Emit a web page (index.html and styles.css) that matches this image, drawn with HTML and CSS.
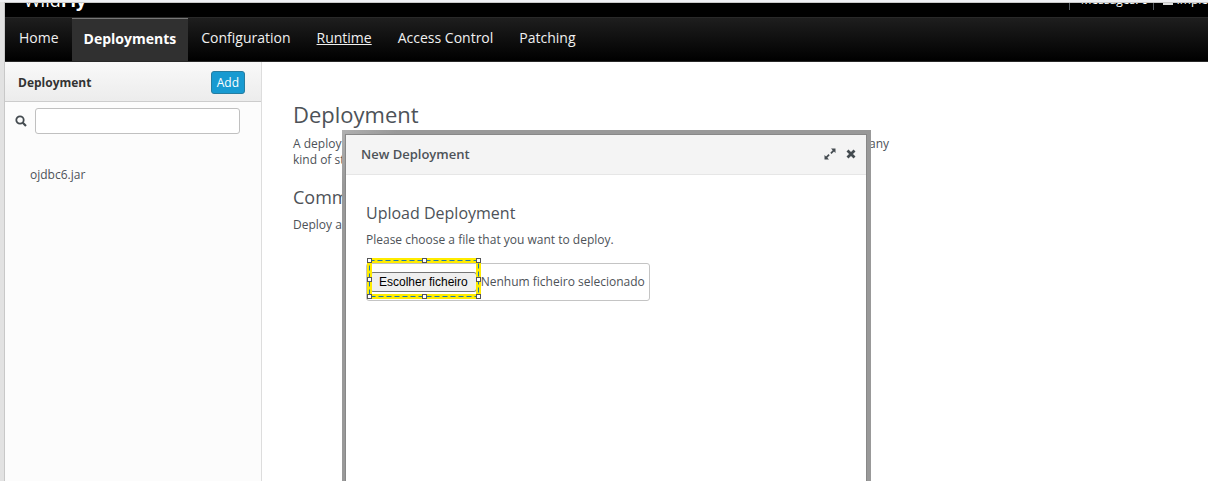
FILE: index.html
```html
<!DOCTYPE html>
<html lang="en">
<head>
<meta charset="utf-8">
<title>WildFly Management</title>
<link rel="stylesheet" href="styles.css">
</head>
<body>
<div class="frame">
  <header class="topbar">
    <div class="logo">Wild<b>Fly</b></div>
    <div class="status">
      <span class="messages">Messages: 0</span>
      <span class="user"><svg width="10" height="12" viewBox="0 0 10 12"><path d="M5 1a3 3 0 0 1 2 5c2 0 3 1 3 4v1H0v-1c0-3 1-4 3-4a3 3 0 0 1 2-5z" fill="#ddd"/></svg>Imple</span>
    </div>
  </header>
  <nav class="nav">
    <a href="#">Home</a>
    <a href="#" class="active">Deployments</a>
    <a href="#">Configuration</a>
    <a href="#" class="hovered">Runtime</a>
    <a href="#">Access Control</a>
    <a href="#">Patching</a>
  </nav>
  <div class="workspace">
    <aside class="sidebar">
      <div class="sidebar-head">
        <h2>Deployment</h2>
        <button class="add" type="button">Add</button>
      </div>
      <div class="search">
        <label for="filter" aria-label="Filter"><svg width="12" height="12" viewBox="0 0 12 12" fill="none" stroke="#444b50"><circle cx="5" cy="5" r="3.7" stroke-width="1.8"/><path d="M7.8 7.8 11 11" stroke-width="2.2"/></svg></label>
        <input id="filter" type="text">
      </div>
      <a class="item" href="#">ojdbc6.jar</a>
    </aside>
    <main class="content">
      <h1>Deployment</h1>
      <p>A deployment represents anything that can be deployed (e.g. an application such as EJB-JAR, WAR, EAR, any kind of standard archive such as RAR or JBoss-specific deployment).</p>
      <h3>Common Tasks</h3>
      <p>Deploy an application to the server.</p>
    </main>
  </div>
  <section class="dialog" role="dialog" aria-labelledby="dialog-title">
    <div class="dialog-inner">
      <div class="dialog-head">
        <h2 id="dialog-title">New Deployment</h2>
        <button class="icon" type="button" aria-label="Maximize"><svg width="12" height="12" viewBox="0 0 12 12"><path d="M7 .5h4.500V5L10 3.500 7.500 6 6.300 4.800 8.700 2.200zM5 11.500H.500V7L2 8.500 4.500 6l1.200 1.200L3.300 9.800z" fill="#444b50"/></svg></button>
        <button class="icon" type="button" aria-label="Close"><svg width="10" height="10" viewBox="0 0 10 10"><path d="M1.500 1.500l7 7M8.500 1.500l-7 7" stroke="#444b50" stroke-width="2.800"/></svg></button>
      </div>
      <div class="dialog-body">
        <h3>Upload Deployment</h3>
        <p>Please choose a file that you want to deploy.</p>
        <div class="file">
          <button class="choose" type="button" aria-describedby="file-name">Escolher ficheiro</button>
          <span id="file-name">Nenhum ficheiro selecionado</span>
          <svg class="marker" width="115" height="44" viewBox="0 0 115 44" fill="none" aria-hidden="true">
            <rect x="3.500" y="3.500" width="109" height="36" stroke="#ffec00" stroke-width="5"/>
            <rect x="3.500" y="3.500" width="109" height="36" stroke="#1b78ad" stroke-dasharray="5 3"/>
            <g fill="#fff" stroke="#555">
              <rect x="1.500" y="1.500" width="4" height="4"/><rect x="56.500" y="1.500" width="4" height="4"/><rect x="110.500" y="1.500" width="4" height="4"/>
              <rect x="1.500" y="20.500" width="4" height="4"/><rect x="110.500" y="20.500" width="4" height="4"/>
              <rect x="1.500" y="37.500" width="4" height="4"/><rect x="56.500" y="37.500" width="4" height="4"/><rect x="110.500" y="37.500" width="4" height="4"/>
            </g>
          </svg>
        </div>
      </div>
    </div>
  </section>
</div>
</body>
</html>
```

FILE: styles.css
```css
* { box-sizing: border-box; }
body {
  margin: 0;
  height: 100vh;
  overflow: hidden;
  padding: 3px 0 0 5px;
  background: linear-gradient(#f0f1f4 2px, transparent 2px), linear-gradient(90deg, #e2e2e2 4px, #c8c8c8 4px);
  font: 12px/16px "Open Sans", sans-serif;
  color: #4d5258;
}
h1, h2, h3, p { margin: 0; font-weight: 400; }
button { font-family: inherit; cursor: pointer; }
.frame {
  position: relative;
  display: flex;
  flex-direction: column;
  height: 100%;
  background: #fff;
  overflow: hidden;
}
.topbar {
  display: flex;
  justify-content: space-between;
  align-items: flex-end;
  height: 14px;
  flex: none;
  overflow: hidden;
  background: #000;
  color: #fff;
}
.logo { padding: 0 0 4px 19px; font-size: 18px; line-height: 26px; }
.status { display: flex; padding-bottom: 7px; font-size: 12px; line-height: 20px; }
.messages, .user { border-left: 1px solid #555b61; }
.messages { padding: 0 5px 0 11px; }
.user { display: flex; gap: 3px; align-items: center; padding-left: 9px; }
.nav {
  display: flex;
  flex: none;
  height: 45px;
  border-top: 1px solid #292929;
  border-bottom: 1px solid #292929;
  background: linear-gradient(#1e1e1e, #000);
  font-size: 14px;
  line-height: 40px;
}
.nav a { padding: 0 13px; color: #f0f0f0; text-decoration: none; }
.nav a:first-child { padding-left: 14px; }
.nav .active {
  padding: 0 12px;
  border-top: 1px solid #777;
  background: #303030;
  color: #fff;
  font-weight: 700;
}
.nav .hovered { text-decoration: underline; text-decoration-thickness: 1px; }
.workspace { display: flex; flex: 1; min-height: 0; }
.sidebar {
  width: 257px;
  flex: none;
  border-right: 1px solid #ddd;
  background: #fcfcfc;
}
.sidebar-head {
  display: flex;
  align-items: center;
  justify-content: space-between;
  height: 40px;
  padding: 2px 16px 0 13px;
  border-bottom: 1px solid #ccc;
  background: linear-gradient(#f9f9f9, #ececec);
}
.sidebar-head h2 { font-size: 12px; line-height: 18px; font-weight: 700; color: #333; }
.add {
  height: 23px;
  padding: 0 5px;
  border: 1px solid #267da1;
  border-radius: 3px;
  background: #189ad1;
  color: #fff;
  font-size: 12px;
  line-height: 20px;
}
.search { display: flex; align-items: center; gap: 8px; padding: 6px 21px 0 10px; }
.search label { display: flex; }
.search input {
  flex: 1;
  min-width: 0;
  height: 26px;
  border: 1px solid #c0c0c0;
  border-radius: 3px;
  background: #fff;
}
.item { display: block; margin: 33px 25px 0; color: #4d5258; text-decoration: none; }
.content { flex: 1; padding: 37px 31px 0; }
.content p { max-width: 610px; }
.content h1 { margin-bottom: 7px; font-size: 22px; line-height: 30px; }
.content h3 { margin: 16px 0 7px; font-size: 18px; line-height: 26px; }
.dialog {
  position: absolute;
  top: 127px;
  bottom: 0;
  left: 337px;
  width: 529px;
  padding: 4px 4px 0 3px;
  background: linear-gradient(135deg, #b0b0b0, #999 40px);
}
.dialog-inner {
  height: 100%;
  border: 1px solid #888;
  border-bottom: 0;
  background: #fff;
}
.dialog-head {
  display: flex;
  align-items: center;
  gap: 10px;
  height: 40px;
  padding: 0 10px 2px 15px;
  border-bottom: 1px solid #e6e6e6;
  background: #f4f4f4;
}
.dialog-head h2 { flex: 1; font-size: 13px; font-weight: 600; }
.icon { display: flex; padding: 0; border: 0; background: none; }
.dialog-body { padding: 26px 20px; }
.dialog-body h3 { margin-bottom: 7px; font-size: 16px; line-height: 24px; }
.file {
  position: relative;
  display: flex;
  align-items: center;
  gap: 4px;
  width: max-content;
  height: 38px;
  margin-top: 15px;
  padding: 0 4px 0 3px;
  border: 1px solid #c4c4c4;
  border-radius: 3px;
}
.choose {
  height: 20px;
  padding: 0 8px;
  border: 1px solid #767676;
  border-radius: 3px;
  background: #efefef;
  color: #000;
  font: 12px/16px "Liberation Sans", Arial, sans-serif;
}
.marker { position: absolute; top: -7px; left: -1px; pointer-events: none; }
```
